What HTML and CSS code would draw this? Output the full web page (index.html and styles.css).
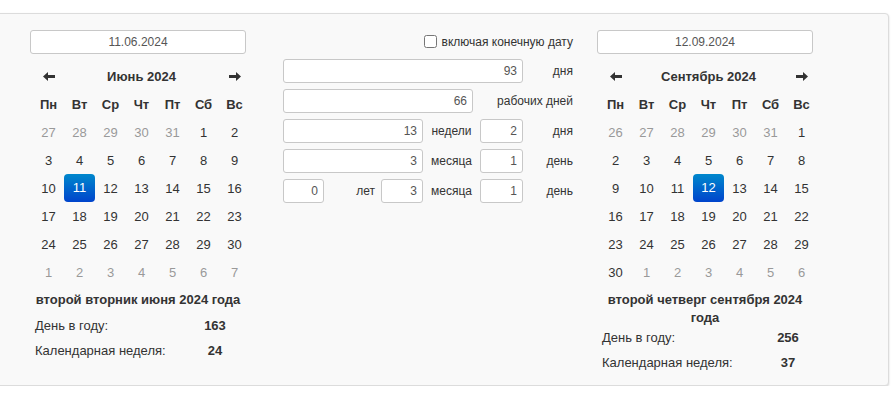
FILE: index.html
```html
<!DOCTYPE html>
<html lang="ru">
<head>
<meta charset="utf-8">
<title>Калькулятор дат</title>
<link rel="stylesheet" href="styles.css">
</head>
<body>
<div class="panel">
  <section class="datecol">
    <div class="dateinput">11.06.2024</div>
    <table class="cal">
      <tr class="nav">
        <td><svg class="arrow" viewBox="0 0 12 9"><path d="M0 4.5 L5 0 L5 3 L12 3 L12 6 L5 6 L5 9 Z"/></svg></td>
        <td colspan="5" class="title">Июнь 2024</td>
        <td><svg class="arrow" viewBox="0 0 12 9"><path d="M12 4.5 L7 0 L7 3 L0 3 L0 6 L7 6 L7 9 Z"/></svg></td>
      </tr>
      <tr class="dow"><td>Пн</td><td>Вт</td><td>Ср</td><td>Чт</td><td>Пт</td><td>Сб</td><td>Вс</td></tr>
      <tr><td class="old">27</td><td class="old">28</td><td class="old">29</td><td class="old">30</td><td class="old">31</td><td>1</td><td>2</td></tr>
      <tr><td>3</td><td>4</td><td>5</td><td>6</td><td>7</td><td>8</td><td>9</td></tr>
      <tr><td>10</td><td><span class="active">11</span></td><td>12</td><td>13</td><td>14</td><td>15</td><td>16</td></tr>
      <tr><td>17</td><td>18</td><td>19</td><td>20</td><td>21</td><td>22</td><td>23</td></tr>
      <tr><td>24</td><td>25</td><td>26</td><td>27</td><td>28</td><td>29</td><td>30</td></tr>
      <tr><td class="old">1</td><td class="old">2</td><td class="old">3</td><td class="old">4</td><td class="old">5</td><td class="old">6</td><td class="old">7</td></tr>
    </table>
    <div class="info">второй вторник июня 2024 года</div>
    <div class="stats">
      <span>День в году:</span><b>163</b>
      <span>Календарная неделя:</span><b>24</b>
    </div>
  </section>

  <section class="mid">
    <label class="check"><input type="checkbox"><span>включая конечную дату</span></label>
    <div class="row">
      <div class="field w240">93</div><span class="lbl end">дня</span>
    </div>
    <div class="row">
      <div class="field w190">66</div><span class="lbl end">рабочих дней</span>
    </div>
    <div class="row">
      <div class="field w140">13</div><span class="lbl unit">недели</span><div class="field w43">2</div><span class="lbl end">дня</span>
    </div>
    <div class="row">
      <div class="field w140">3</div><span class="lbl unit">месяца</span><div class="field w43">1</div><span class="lbl end">день</span>
    </div>
    <div class="row">
      <div class="field w41">0</div><span class="lbl yr">лет</span><div class="field w42">3</div><span class="lbl unit">месяца</span><div class="field w43">1</div><span class="lbl end">день</span>
    </div>
  </section>

  <section class="datecol wide">
    <div class="dateinput">12.09.2024</div>
    <table class="cal">
      <tr class="nav">
        <td><svg class="arrow" viewBox="0 0 12 9"><path d="M0 4.5 L5 0 L5 3 L12 3 L12 6 L5 6 L5 9 Z"/></svg></td>
        <td colspan="5" class="title">Сентябрь 2024</td>
        <td><svg class="arrow" viewBox="0 0 12 9"><path d="M12 4.5 L7 0 L7 3 L0 3 L0 6 L7 6 L7 9 Z"/></svg></td>
      </tr>
      <tr class="dow"><td>Пн</td><td>Вт</td><td>Ср</td><td>Чт</td><td>Пт</td><td>Сб</td><td>Вс</td></tr>
      <tr><td class="old">26</td><td class="old">27</td><td class="old">28</td><td class="old">29</td><td class="old">30</td><td class="old">31</td><td>1</td></tr>
      <tr><td>2</td><td>3</td><td>4</td><td>5</td><td>6</td><td>7</td><td>8</td></tr>
      <tr><td>9</td><td>10</td><td>11</td><td><span class="active">12</span></td><td>13</td><td>14</td><td>15</td></tr>
      <tr><td>16</td><td>17</td><td>18</td><td>19</td><td>20</td><td>21</td><td>22</td></tr>
      <tr><td>23</td><td>24</td><td>25</td><td>26</td><td>27</td><td>28</td><td>29</td></tr>
      <tr><td>30</td><td class="old">1</td><td class="old">2</td><td class="old">3</td><td class="old">4</td><td class="old">5</td><td class="old">6</td></tr>
    </table>
    <div class="info">второй четверг сентября 2024 года</div>
    <div class="stats">
      <span>День в году:</span><b>256</b>
      <span>Календарная неделя:</span><b>37</b>
    </div>
  </section>
</div>
</body>
</html>
```

FILE: styles.css
```css
html, body {
  margin: 0;
  padding: 0;
  background: #fff;
}
body {
  font-family: "Liberation Sans", Arial, sans-serif;
  font-size: 13px;
  color: #333;
}
.panel {
  margin: 13px 0 0 -6px;
  width: 895px;
  box-sizing: border-box;
  background: #f9f9f9;
  border: 1px solid #dcdcdc;
  border-radius: 4px;
  box-shadow: 0 1px 2px rgba(0,0,0,0.18);
  padding: 16px 0 10px 35px;
  display: flex;
  align-items: flex-start;
}
.datecol {
  width: 220px;
  flex: none;
}
.datecol.wide {
  width: 226px;
}
.datecol + .mid {
  margin-left: 33px;
}
.mid + .datecol {
  margin-left: 24px;
}
.dateinput {
  width: 216px;
  height: 24px;
  box-sizing: border-box;
  border: 1px solid #c8c8c8;
  border-radius: 3px;
  background: #fff;
  font-size: 12px;
  line-height: 22px;
  text-align: center;
  color: #555;
}
.cal {
  border-collapse: collapse;
  border-spacing: 0;
  margin: 8px 0 0 3px;
  table-layout: fixed;
  width: 217px;
}
.cal td {
  width: 31px;
  height: 28px;
  padding: 0;
  text-align: center;
  vertical-align: middle;
  font-size: 13px;
  color: #333;
}
.cal .nav td, .cal .dow td {
  font-weight: bold;
}
.cal td.title {
  width: auto;
}
.cal td.old {
  color: #999;
}
.arrow {
  width: 12px;
  height: 9px;
  display: block;
  margin: 0 auto;
  fill: #333;
}
.active {
  display: block;
  width: 31px;
  height: 28px;
  line-height: 28px;
  border-radius: 4px;
  color: #fff;
  background: linear-gradient(to bottom, #0088cc, #0044cc);
}
.info {
  width: 216px;
  margin-top: 5px;
  min-height: 22px;
  line-height: 18px;
  font-weight: bold;
  text-align: center;
}
.stats {
  display: grid;
  grid-template-columns: 1fr 70px;
  grid-auto-rows: 25px;
  align-items: center;
}
.wide .stats {
  margin-top: -2px;
}
.stats span {
  padding-left: 5px;
}
.stats b {
  text-align: center;
}
.mid {
  width: 290px;
  flex: none;
  display: flex;
  flex-direction: column;
  gap: 6px;
  font-size: 12px;
}
.check {
  display: flex;
  align-items: center;
  justify-content: flex-end;
  height: 23px;
}
.check input {
  width: 13px;
  height: 13px;
  margin: 0 5px 0 0;
}
.row {
  display: flex;
  align-items: center;
  height: 24px;
}
.field {
  height: 24px;
  box-sizing: border-box;
  border: 1px solid #c8c8c8;
  border-radius: 3px;
  background: #fff;
  color: #555;
  text-align: right;
  padding-right: 5px;
  line-height: 22px;
  font-size: 12px;
  flex: none;
}
.w240 { width: 240px; }
.w190 { width: 190px; }
.w140 { width: 140px; }
.w43 { width: 43px; }
.w42 { width: 42px; }
.w41 { width: 41px; }
.lbl {
  flex: none;
}
.lbl.end {
  flex: 1;
  text-align: right;
}
.lbl.unit {
  width: 57px;
  text-align: center;
}
.lbl.yr {
  width: 57px;
  text-align: right;
  padding-right: 6px;
  box-sizing: border-box;
}
```
